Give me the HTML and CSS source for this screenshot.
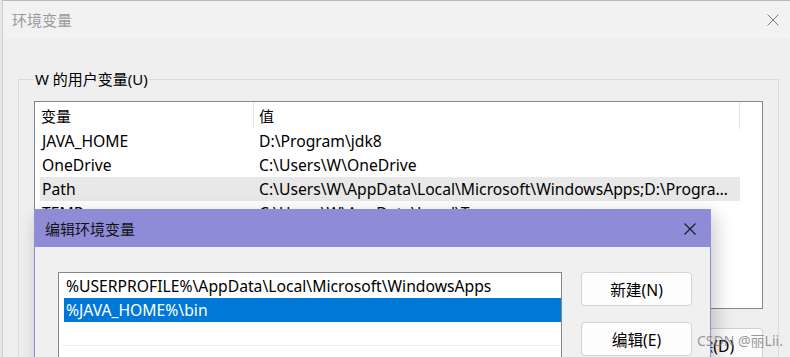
FILE: index.html
```html
<!DOCTYPE html>
<html lang="zh-CN">
<head>
<meta charset="utf-8">
<link rel="stylesheet" href="styles.css">
<title>环境变量</title>
</head>
<body>
<div class="strip"></div>
<div class="window">
  <div class="titlebar">
    <span class="title">环境变量</span>
    <svg class="close" width="12" height="12" viewBox="0 0 12 12"><path d="M0.5 0.5 L11.5 11.5 M11.5 0.5 L0.5 11.5" stroke="#7a7a7a" stroke-width="1" fill="none"/></svg>
  </div>
  <div class="winbody">
    <fieldset class="group">
      <legend>W 的用户变量(U)</legend>
      <div class="listview">
        <div class="lv-head">
          <div class="c1">变量</div>
          <div class="c2">值</div>
        </div>
        <div class="lv-row"><div class="c1">JAVA_HOME</div><div class="c2">D:\Program\jdk8</div></div>
        <div class="lv-row"><div class="c1">OneDrive</div><div class="c2">C:\Users\W\OneDrive</div></div>
        <div class="lv-row hover"><div class="c1">Path</div><div class="c2">C:\Users\W\AppData\Local\Microsoft\WindowsApps;D:\Program\jdk8\bin;C:\Users\W\AppData</div></div>
        <div class="lv-row"><div class="c1">TEMP</div><div class="c2">C:\Users\W\AppData\Local\Temp</div></div>
        <div class="lv-row"><div class="c1">TMP</div><div class="c2">C:\Users\W\AppData\Local\Temp</div></div>
      </div>
      <div class="btnrow">
        <button class="wbtn">新建(N)...</button>
        <button class="wbtn">编辑(E)...</button>
        <button class="wbtn">删除(D)</button>
      </div>
    </fieldset>
  </div>
</div>

<div class="dialog">
  <div class="dlg-title">
    <span>编辑环境变量</span>
    <svg class="dlg-close" width="12" height="12" viewBox="0 0 12 12"><path d="M0.5 0.5 L11.5 11.5 M11.5 0.5 L0.5 11.5" stroke="#1a1a1a" stroke-width="1.1" fill="none"/></svg>
  </div>
  <div class="dlg-body">
    <div class="plist">
      <div class="prow">%USERPROFILE%\AppData\Local\Microsoft\WindowsApps</div>
      <div class="prow sel">%JAVA_HOME%\bin</div>
      <div class="prow empty"></div>
    </div>
    <div class="dlg-btns">
      <button class="dbtn">新建(N)</button>
      <button class="dbtn">编辑(E)</button>
    </div>
  </div>
</div>

<div class="watermark">CSDN @丽Lii.</div>
</body>
</html>
```

FILE: styles.css
```css
html, body {
  margin: 0;
  padding: 0;
}
* {
  box-sizing: border-box;
}
body {
  width: 790px;
  height: 357px;
  overflow: hidden;
  position: relative;
  display: flex;
  background: #e9e9e9;
  font-family: "Noto Sans", "Noto Sans CJK SC", sans-serif;
  font-size: 15.7px;
  color: #000;
}
.strip {
  width: 2px;
  flex: none;
  background: #e6e6e6;
}
.window {
  flex: 1;
  display: flex;
  flex-direction: column;
  border-top: 1px solid #b8b8b8;
  border-left: 1px solid #cfcfcf;
  background: #f0f0f0;
}
.titlebar {
  height: 37px;
  flex: none;
  background: #f2f2f2;
  display: flex;
  align-items: center;
  justify-content: space-between;
  padding: 0 11px 0 9px;
}
.title {
  color: #9a9a9a;
  font-family: "Noto Sans CJK SC", sans-serif;
  font-size: 15px;
  line-height: 20px;
}
.close {
  display: block;
}
.winbody {
  flex: 1;
  background: #efefef;
  padding: 31px 11px 0 15px;
}
.group {
  margin: 0;
  border: 1px solid #dadada;
  padding: 12px 15px 0 15px;
  height: 290px;
}
.group legend {
  font-family: "Noto Sans", "Noto Sans CJK SC", sans-serif;
  font-size: 15px;
  line-height: 20px;
  padding: 0 1px;
  margin-left: 0;
}
.listview {
  height: 208px;
  border: 1px solid #828790;
  background: #fff;
  padding: 0 0 0 5px;
  overflow: hidden;
}
.lv-head, .lv-row {
  width: 700px;
  display: grid;
  grid-template-columns: 214px 1fr;
}
.lv-head {
  height: 27px;
  font-size: 15px;
}
.lv-head .c1 {
  border-right: 1px solid #e5e5e5;
  padding-left: 1px;
  height: 27px;
  line-height: 28px;
}
.lv-head .c2 {
  border-right: 1px solid #e5e5e5;
  padding-left: 5px;
  height: 27px;
  line-height: 28px;
}
.lv-row {
  height: 24px;
  line-height: 24px;
}
.lv-row .c1 {
  padding-left: 2px;
}
.lv-row .c2 {
  padding-left: 5px;
  white-space: nowrap;
  overflow: hidden;
  text-overflow: ellipsis;
  padding-right: 6px;
}
.lv-row.hover {
  background: #e8e8e8;
}
.btnrow {
  display: flex;
  justify-content: flex-end;
  gap: 10px;
  margin-top: 19px;
}
.wbtn {
  width: 110px;
  height: 34px;
  border: 1px solid #d0d0d0;
  border-radius: 4px;
  background: #fbfbfb;
  font-family: "Noto Sans", "Noto Sans CJK SC", sans-serif;
  font-size: 15.7px;
  color: #000;
  padding: 0;
}

/* Child dialog window */
.dialog {
  position: absolute;
  left: 34px;
  top: 209px;
  width: 677px;
  height: 200px;
  border: 1px solid #8f8cd8;
  background: #f0f0f0;
  box-shadow: 4px 6px 18px rgba(0, 0, 0, 0.22);
}
.dlg-title {
  height: 37px;
  background: #8e8bd7;
  display: flex;
  align-items: center;
  justify-content: space-between;
  padding: 0 14px 0 10px;
  font-family: "Noto Sans CJK SC", sans-serif;
  font-size: 15px;
  color: #141414;
  line-height: 20px;
}
.dlg-close {
  display: block;
}
.dlg-body {
  display: flex;
  align-items: flex-start;
  gap: 19px;
  padding: 25px 0 0 23px;
}
.plist {
  width: 504px;
  height: 120px;
  border: 1px solid #828790;
  background: #fff;
  padding: 1px 0 0 5px;
}
.prow {
  height: 24px;
  line-height: 24px;
  padding-left: 2px;
  white-space: nowrap;
}
.prow.sel {
  background: #0078d7;
  color: #fff;
}
.prow.empty {
  border-bottom: 1px solid #ececec;
  margin-right: 2px;
  margin-left: -2px;
}
.dlg-btns {
  display: flex;
  flex-direction: column;
  gap: 16px;
}
.dbtn {
  width: 111px;
  height: 34px;
  border: 1px solid #d3d3d3;
  border-radius: 4px;
  background: #fdfdfd;
  font-family: "Noto Sans", "Noto Sans CJK SC", sans-serif;
  font-size: 15.7px;
  color: #000;
  padding: 0;
}
.watermark {
  position: absolute;
  left: 697px;
  top: 332px;
  font-family: "Noto Sans", "Noto Sans CJK SC", sans-serif;
  font-size: 14px;
  line-height: 18px;
  color: rgba(120, 120, 120, 0.75);
}
```
